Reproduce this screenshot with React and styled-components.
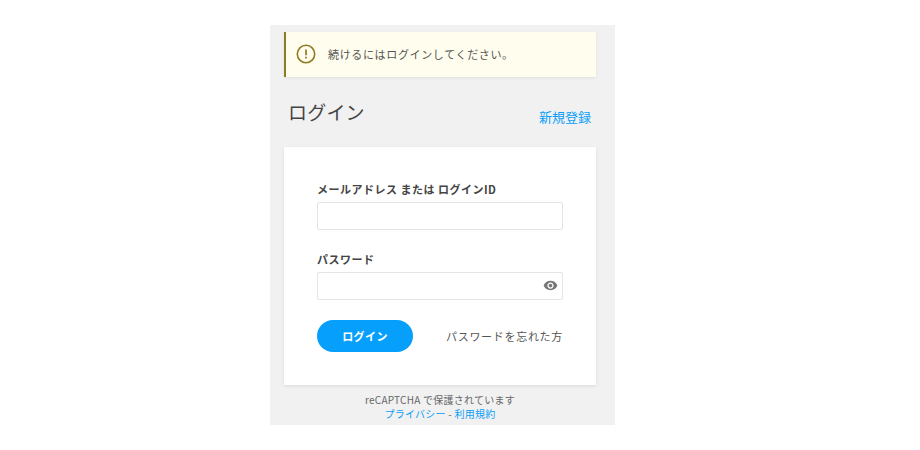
import React from "react";
import styled, { createGlobalStyle } from "styled-components";

const GlobalStyle = createGlobalStyle`
  html, body {
    margin: 0;
    padding: 0;
    background: #fff;
    font-family: "Noto Sans CJK JP", "Noto Sans", sans-serif;
  }
`;

const Page = styled.div`
  display: flex;
  justify-content: flex-start;
  width: 920px;
  height: 450px;
  padding: 25px 0 0 270px;
  box-sizing: border-box;
`;

const Panel = styled.main`
  width: 345px;
  height: 400px;
  box-sizing: border-box;
  padding: 7px 19px 0 14px;
  background: #f1f1f1;
  overflow: hidden;
`;

const Alert = styled.div`
  display: flex;
  align-items: center;
  gap: 12px;
  height: 45px;
  box-sizing: border-box;
  padding: 0 0 1px 10px;
  background: #fffdee;
  border-left: 2px solid #8f7a24;
  box-shadow: 0 1px 3px rgba(0, 0, 0, 0.08);
  color: #555;
  font-size: 11px;
  letter-spacing: 0.65px;
`;

const Header = styled.header`
  display: flex;
  justify-content: space-between;
  align-items: flex-end;
  height: 50px;
  padding: 0 5px 0 4px;
`;

const Title = styled.h1`
  margin: 0 0 1px;
  font-size: 19px;
  line-height: 28px;
  font-weight: 400;
  color: #444;
  letter-spacing: 0.2px;
`;

const RegisterLink = styled.a`
  color: #099ef8;
  font-size: 13px;
  line-height: 20px;
  text-decoration: none;
`;

const Card = styled.form`
  margin-top: 20px;
  height: 238px;
  box-sizing: border-box;
  padding: 33px 33px 0;
  background: #fff;
  box-shadow: 0 1px 3px rgba(0, 0, 0, 0.1);
`;

const Field = styled.div`
  margin-bottom: 20px;
`;

const Label = styled.label`
  display: block;
  height: 22px;
  font-size: 11px;
  line-height: 18px;
  font-weight: 700;
  color: #444;
  letter-spacing: 0.5px;
`;

const InputWrap = styled.div`
  position: relative;
`;

const Input = styled.input`
  display: block;
  width: 100%;
  height: 28px;
  box-sizing: border-box;
  border: 1px solid #e4e4e4;
  border-radius: 2px;
  background: #fff;
  outline: none;
`;

const EyeIcon = styled.svg`
  position: absolute;
  right: 5px;
  top: 6px;
  width: 15px;
  height: 15px;
  fill: #777;
`;

const Actions = styled.div`
  display: flex;
  justify-content: space-between;
  align-items: center;
`;

const SubmitButton = styled.button`
  width: 96px;
  height: 32px;
  border: 0;
  border-radius: 16px;
  background: #069ffb;
  color: #fff;
  font-family: inherit;
  font-size: 11px;
  font-weight: 700;
  letter-spacing: 0.4px;
`;

const Forgot = styled.a`
  color: #555;
  font-size: 11px;
  letter-spacing: 0.7px;
  text-decoration: none;
`;

const Footer = styled.footer`
  margin-top: 8px;
  text-align: center;
  color: #666;
  font-size: 10px;
  line-height: 14px;
  letter-spacing: 0.25px;
`;

const FooterLink = styled.a`
  color: #099ef8;
  text-decoration: none;
`;

const AlertIcon = () => (
  <svg width="20" height="20" viewBox="0 0 20 20" fill="none">
    <circle cx="10" cy="10" r="8.7" stroke="#8f7a24" strokeWidth="1.6" />
    <path d="M10 5.6v5.6" stroke="#8f7a24" strokeWidth="1.7" />
    <path d="M10 12.8v1.7" stroke="#8f7a24" strokeWidth="1.7" />
  </svg>
);

export default function App() {
  return (
    <Page>
      <GlobalStyle />
      <Panel>
        <Alert>
          <AlertIcon />
          <span>続けるにはログインしてください。</span>
        </Alert>
        <Header>
          <Title>ログイン</Title>
          <RegisterLink href="#">新規登録</RegisterLink>
        </Header>
        <Card>
          <Field>
            <Label>メールアドレス または ログインID</Label>
            <Input type="text" />
          </Field>
          <Field>
            <Label>パスワード</Label>
            <InputWrap>
              <Input type="password" />
              <EyeIcon viewBox="0 0 24 24">
                <path d="M12 4.5C7 4.5 2.700 7.600 1 12c1.700 4.400 6 7.500 11 7.500s9.300-3.100 11-7.500c-1.700-4.400-6-7.500-11-7.500zM12 17c-2.800 0-5-2.200-5-5s2.200-5 5-5 5 2.200 5 5-2.200 5-5 5zm0-8c-1.700 0-3 1.300-3 3s1.300 3 3 3 3-1.300 3-3-1.300-3-3-3z" />
              </EyeIcon>
            </InputWrap>
          </Field>
          <Actions>
            <SubmitButton type="button">ログイン</SubmitButton>
            <Forgot href="#">パスワードを忘れた方</Forgot>
          </Actions>
        </Card>
        <Footer>
          <div>reCAPTCHA で保護されています</div>
          <div>
            <FooterLink href="#">プライバシー</FooterLink> - <FooterLink href="#">利用規約</FooterLink>
          </div>
        </Footer>
      </Panel>
    </Page>
  );
}
